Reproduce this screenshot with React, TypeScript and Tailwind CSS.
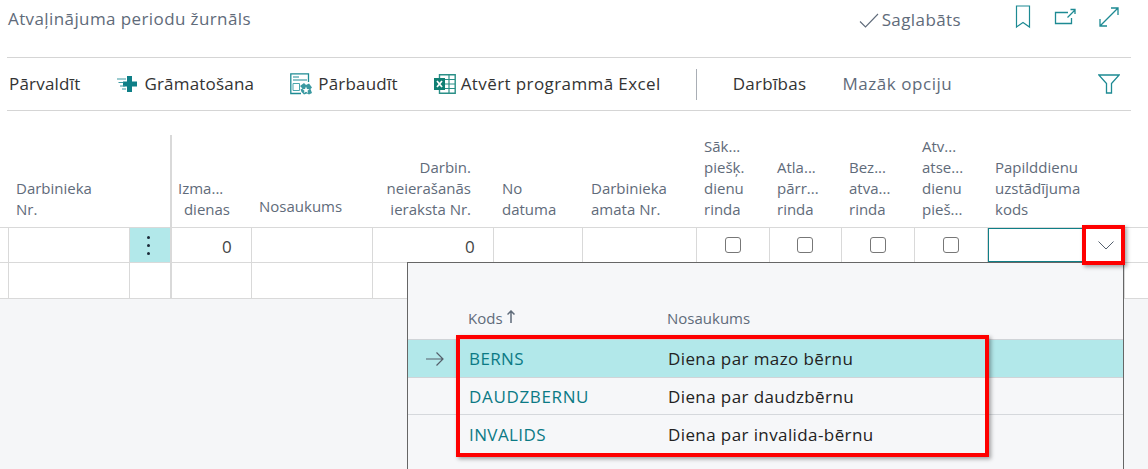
import React from 'react';

const teal = '#1d8a93';

const BookmarkIcon = () => (
  <svg width="16" height="24" viewBox="0 0 16 24" fill="none" stroke={teal} strokeWidth="1.2">
    <path d="M1.5 1v21l6.500-4.500 6.500 4.500V1z" />
  </svg>
);

const OpenIcon = () => (
  <svg width="24" height="20" viewBox="0 0 24 20" fill="none" stroke={teal} strokeWidth="1.3">
    <path d="M14 5.500H1.500v11h16V11" />
    <path d="M13.500 10.500l7-7M16.500 2.500h4.500v4.500" />
  </svg>
);

const ExpandIcon = () => (
  <svg width="20" height="20" viewBox="0 0 20 20" fill="none" stroke={teal} strokeWidth="1.3">
    <path d="M1.500 18.500l17-17M12 1h7v7M1 12v7h7" />
  </svg>
);

const PostIcon = () => (
  <svg width="20" height="16" viewBox="0 0 20 16" fill="none">
    <path d="M10 0h5v5.500h5v5h-5V16h-5v-5.500H6v-5h4z" fill="#0f7f87" />
    <path d="M0 3h9M1.500 6.500h5M3 10h5M5 13h4" stroke="#3c9aa2" strokeWidth="1.100" />
  </svg>
);

const CheckDocIcon = () => (
  <svg width="23" height="22" viewBox="0 0 23 22" fill="none">
    <path d="M11 20.500H.8V.8h17.700V9" stroke="#1d8a93" strokeWidth="1.300" />
    <path d="M3 4h6M3 7h14" stroke="#1d8a93" strokeWidth="1.100" />
    <path d="M3 10.500h6.500v7H3z" stroke="#4ba6ad" strokeWidth="1" />
    <path d="M10 13l4-3 2 2 3-1.500 3 4-1.500 1.500L22 20l-3 1.500-2-1-3 1-2.500-2.500-1-2.500 2-1z" fill="#3b99a1" />
    <path d="M16 13.500l1 2.500 2.500.2-2 1.500.7 2.300-2.200-1.300-2.200 1.300.7-2.300-2-1.500 2.500-.2z" fill="#fff" />
  </svg>
);

const ExcelIcon = () => (
  <svg width="23" height="20" viewBox="0 0 23 20" fill="none">
    <path d="M6.500.8h15.700v18.400H6.500z" fill="#fff" stroke="#2a8f87" strokeWidth="1.400" />
    <path d="M11 5.500h11M11 10h11M11 14.500h11M16 1v18" stroke="#2a8f87" strokeWidth="1.200" />
    <rect x="1" y="4" width="11" height="12" fill="#0f7f73" />
    <path d="M4 7l5 6M9 7l-5 6" stroke="#fff" strokeWidth="1.700" />
  </svg>
);

const FilterIcon = () => (
  <svg width="22" height="20" viewBox="0 0 22 20" fill="none" stroke={teal} strokeWidth="1.300">
    <path d="M.8 1h20.400l-7.700 8.500V19h-5V9.500z" />
  </svg>
);

const CheckGlyph = () => (
  <svg width="20" height="15" viewBox="0 0 20 15" fill="none" stroke="#5f6b7a" strokeWidth="1.100">
    <path d="M1 8.500l5.500 5.500L19 1" />
  </svg>
);

const Chevron = () => (
  <svg width="16" height="9" viewBox="0 0 16 9" fill="none" stroke="#55606e" strokeWidth="1">
    <path d="M.5.5L8 8 15.500.5" />
  </svg>
);

const Arrow = () => (
  <svg width="18" height="14" viewBox="0 0 18 14" fill="none" stroke="#555f6b" strokeWidth="1.200">
    <path d="M0 7h17M10.500.5L17 7l-6.500 6.500" />
  </svg>
);

const SortUp = () => (
  <svg width="8" height="13" viewBox="0 0 8 13" fill="none" stroke="#5f6b7a" strokeWidth="1.500">
    <path d="M4 13V1M.5 4.500L4 1l3.500 3.500" />
  </svg>
);

const Checkbox = () => <span className="block w-[16px] h-[16px] rounded-[3px] border-[1.5px] border-[#777] bg-white" />;

function DataRow({ first }: { first: boolean }) {
  const cell = 'border-r border-[#d9d9d9] h-full shrink-0';
  const boxes = ['w-[73px]', 'w-[72px]', 'w-[73px]', 'w-[73px]'];
  return (
    <div className={`flex border-b border-[#d9d9d9] ${first ? 'h-[35px]' : 'h-[36px]'} bg-white`}>
      <div className={`${cell} w-[9px]`} />
      <div className={`${cell} w-[121px]`} />
      <div className={`shrink-0 w-[40px] h-full flex items-center justify-center pr-[3px] ${first ? 'bg-[#b2e8ea]' : ''}`}>
        {first && (
          <span className="flex flex-col gap-[5px]">
            <i className="block w-[3px] h-[3px] rounded-full bg-[#1b2a3a]" />
            <i className="block w-[3px] h-[3px] rounded-full bg-[#1b2a3a]" />
            <i className="block w-[3px] h-[3px] rounded-full bg-[#1b2a3a]" />
          </span>
        )}
      </div>
      <div className={`${cell} w-[82px] border-l-2 text-right pr-[19px] leading-[37px] text-[#444]`}>{first ? '0' : ''}</div>
      <div className={`${cell} w-[121px]`} />
      <div className={`${cell} w-[121px] text-right pr-[18px] leading-[37px] text-[#444]`}>{first ? '0' : ''}</div>
      <div className={`${cell} w-[89px]`} />
      <div className={`${cell} w-[114px]`} />
      {boxes.map((w, i) => (
        <div key={i} className={`${cell} ${w} flex items-center justify-center pr-[1px]`}>
          {first && <Checkbox />}
        </div>
      ))}
      <div className={`${cell} w-[137px]`}>
        {first && <div className="w-[98px] h-full border border-[#0f7f87]" />}
      </div>
    </div>
  );
}

export default function App() {
  const head = 'shrink-0 text-[15px] tracking-[0px] leading-[21px] text-[#5f6b7a] pb-[7px]';
  return (
    <div className="relative w-[1148px] h-[469px] overflow-hidden bg-[#f5f6f8] font-['Open_Sans',sans-serif] text-[17px] tracking-[0.4px]">
      <div className="bg-white">
        <div className="h-[58px] ml-[7px] mr-[17px] border-b border-[#d5d5d5] flex items-start">
          <h1 className="mt-[7px] ml-[1px] text-[17px] leading-[24px] text-[#5f6b7a] font-normal">Atvaļinājuma periodu žurnāls</h1>
          <div className="ml-auto flex items-start text-[#5f6b7a]">
            <span className="mt-[10px] flex items-center gap-[3px] mr-[54px]">
              <CheckGlyph />
              <span className="leading-[20px]">Saglabāts</span>
            </span>
            <span className="mt-[5px] mr-[23px]"><BookmarkIcon /></span>
            <span className="mt-[7px] mr-[21px]"><OpenIcon /></span>
            <span className="mt-[7px] mr-[12px]"><ExpandIcon /></span>
          </div>
        </div>
        <div className="h-[53px] ml-[7px] mr-[17px] border-b border-[#d5d5d5] flex items-center text-[#333]">
          <span className="ml-[2px] mr-[37px] tracking-[0.2px]">Pārvaldīt</span>
          <span className="flex items-center gap-[7px] mr-[36px] tracking-[0.2px]"><PostIcon />Grāmatošana</span>
          <span className="flex items-center gap-[5px] mr-[35px] tracking-[0.2px]"><CheckDocIcon />Pārbaudīt</span>
          <span className="flex items-center gap-[5px] mr-[35px]"><ExcelIcon />Atvērt programmā Excel</span>
          <span className="h-[31px] w-px bg-[#a9aeb5] mr-[36px]" />
          <span className="mr-[36px] tracking-[0.3px]">Darbības</span>
          <span className="text-[#5f6b7a] tracking-[0.55px]">Mazāk opciju</span>
          <span className="ml-auto mr-[11px]"><FilterIcon /></span>
        </div>

        <div className="mt-[24px] flex h-[93px] items-end border-b border-[#d9d9d9]">
          <div className={`${head} w-[130px] pl-[16px]`}>Darbinieka<br />Nr.</div>
          <div className="shrink-0 w-[40px] h-full" />
          <div className={`${head} w-[82px] h-full border-l-2 border-[#d9d9d9] pl-[6px] pr-[22px] flex flex-col justify-end`}>
            <span>Izma...</span>
            <span className="self-end">dienas</span>
          </div>
          <div className={`${head} w-[121px] pl-[7px] pb-[10px]`}>Nosaukums</div>
          <div className={`${head} w-[121px] pr-[23px] text-right`}>Darbin.<br />neierašanās<br />ieraksta Nr.</div>
          <div className={`${head} w-[89px] pl-[8px]`}>No<br />datuma</div>
          <div className={`${head} w-[114px] pl-[8px]`}>Darbinieka<br />amata Nr.</div>
          <div className={`${head} w-[73px] pl-[7px]`}>Sāk...<br />piešķ.<br />dienu<br />rinda</div>
          <div className={`${head} w-[72px] pl-[7px]`}>Atla...<br />pārr...<br />rinda</div>
          <div className={`${head} w-[73px] pl-[7px]`}>Bez...<br />atva...<br />rinda</div>
          <div className={`${head} w-[73px] pl-[7px]`}>Atv...<br />atse...<br />dienu<br />pieš...</div>
          <div className={`${head} w-[136px] pl-[7px]`}>Papilddienu<br />uzstādījuma<br />kods</div>
        </div>
        <DataRow first />
        <DataRow first={false} />
      </div>

      {/* lookup popup */}
      <div className="absolute left-[407px] top-[262px] w-[717px] h-[220px] bg-[#f6f7f9] border border-[#666]">
        <div className="h-[76px] flex items-end pb-[11px] text-[15px] tracking-[0px] leading-[20px] text-[#5f6b7a]">
          <span className="ml-[60px] w-[199px] flex items-center gap-[4px]">Kods <span className="-mt-[4px]"><SortUp /></span></span>
          <span>Nosaukums</span>
        </div>
        <div className="h-[39px] bg-[#b2e8ea] flex items-center border-y border-[#d0d4d8] pt-[1px]">
          <span className="ml-[18px] w-[43px]"><Arrow /></span>
          <span className="w-[199px] text-[#0b7a85]">BERNS</span>
          <span className="text-[#222]">Diena par mazo bērnu</span>
        </div>
        <div className="h-[37px] flex items-center border-b border-[#d5d8dc] pt-[1px]">
          <span className="ml-[61px] w-[199px] text-[#0b7a85] tracking-[0.65px]">DAUDZBERNU</span>
          <span className="text-[#222]">Diena par daudzbērnu</span>
        </div>
        <div className="h-[38px] flex items-center pt-[1px]">
          <span className="ml-[61px] w-[199px] text-[#0b7a85]">INVALIDS</span>
          <span className="text-[#222]">Diena par invalida-bērnu</span>
        </div>
      </div>

      {/* dropdown button with highlight */}
      <div className="absolute left-[1082px] top-[225px] w-[43px] h-[40px] border-[4px] border-[#fe0000] shadow-[2px_2px_4px_rgba(0,0,0,0.35)] flex items-center justify-center pl-[4px] bg-white">
        <Chevron />
      </div>

      {/* highlight round the lookup rows */}
      <div className="absolute left-[456px] top-[335px] w-[533px] h-[122px] border-[4px] border-[#fe0000] shadow-[2px_2px_4px_rgba(0,0,0,0.35)]" />
    </div>
  );
}
